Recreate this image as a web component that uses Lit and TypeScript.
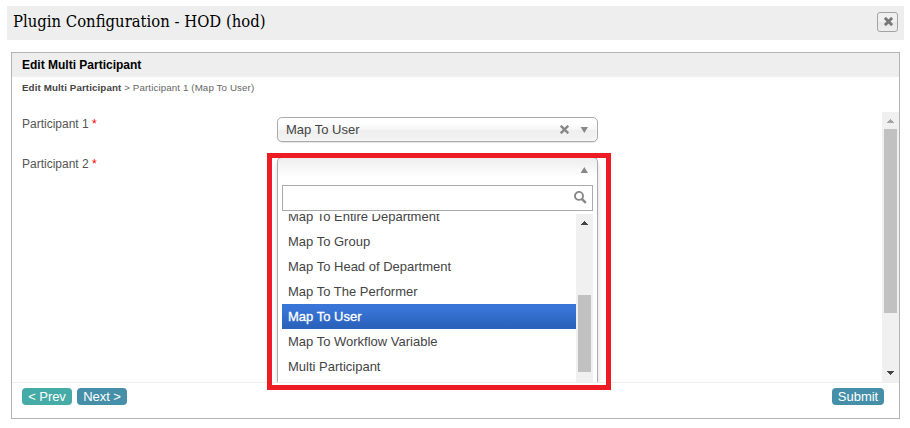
import { LitElement, html, css } from "lit";
import { customElement, property } from "lit/decorators.js";
import { classMap } from "lit/directives/class-map.js";

const OPTIONS = [
  "Map To Entire Department",
  "Map To Group",
  "Map To Head of Department",
  "Map To The Performer",
  "Map To User",
  "Map To Workflow Variable",
  "Multi Participant",
];

@customElement("scroll-track")
class ScrollTrack extends LitElement {
  @property({ type: Number }) before = 0;
  @property({ type: Number }) size = 0;
  @property({ type: Boolean }) atTop = false;
  @property({ type: Boolean }) noDown = false;

  static styles = css`
    :host { display: flex; flex-direction: column; width: 17px; flex: none; background: #f0f0f0; overflow: hidden; }
    svg { display: block; width: 17px; height: 17px; flex: none; fill: #444; }
    .dim { fill: #a3a3a3; }
    .gap { flex: none; }
    .thumb { background: #c1c1c1; margin: 0 2px; flex: none; }
    .rest { flex: 1; }
  `;

  render() {
    return html`
      <svg class=${classMap({ dim: this.atTop })} viewBox="0 0 17 17" shape-rendering="crispEdges"><path d="M8 7h1v1h1v1h1v1h1v1H5v-1h1V9h1V8h1z"/></svg>
      <div class="gap" style="height:${this.before}px"></div>
      <div class="thumb" style="height:${this.size}px"></div>
      <div class="rest"></div>
      ${this.noDown ? "" : html`<svg viewBox="0 0 17 17" shape-rendering="crispEdges"><path d="M5 6h7v1h-1v1h-1v1H9v1H8V9H7V8H6V7H5z"/></svg>`}
    `;
  }
}

@customElement("app-root")
class AppRoot extends LitElement {
  static styles = css`
    :host { display: block; height: 428px; overflow: hidden; box-sizing: border-box; padding: 6px 6px 0 7px; background: #fff; color: #444; font: 12px/16px "Liberation Sans", Arial, sans-serif; }
    * { box-sizing: border-box; }
    .title { display: flex; align-items: center; justify-content: space-between; height: 34px; padding: 0 6px; background: #eee; }
    h1 { margin: 0 0 3px; color: #000; font: 400 16.5px/24px "DejaVu Serif Condensed", "DejaVu Serif", serif; font-stretch: condensed; white-space: nowrap; }
    .close { display: flex; align-items: center; justify-content: center; width: 21px; height: 20px; margin-top: -3px; padding: 0 0 0 2px; border: 1px solid #a3a3a3; border-radius: 3px; background: linear-gradient(#f0f0f0 50%, #e7e7e7 50%, #eee); }
    .panel { display: flex; flex-direction: column; width: 889px; height: 367px; margin: 12px 0 0 4px; border: 1px solid #b3b3b3; }
    h2 { margin: 0; height: 24px; padding-left: 10px; background: #eee; color: #000; font-size: 12px; line-height: 24px; }
    .crumbs { height: 35px; padding: 3px 0 0 10px; font-size: 9.75px; letter-spacing: .11px; color: #666; }
    .crumbs b { color: #444; }
    .body { display: flex; height: 270px; flex: none; }
    .form { flex: 1; padding: 5px 0 0 10px; }
    .row { display: grid; grid-template-columns: 255px 321px; height: 40px; }
    label { line-height: 14px; color: #555; }
    label span { color: #f00; }
    .field { position: relative; height: 25px; }
    .select { display: flex; align-items: center; height: 25px; padding: 0 8px; border: 1px solid #aaa; border-radius: 5px; background: linear-gradient(#fff 20%, #f6f6f6 50%, #eee 52%, #f4f4f4); box-shadow: 0 0 3px #fff inset, 0 1px 1px rgba(0,0,0,.1); font-size: 13px; }
    .select span { flex: 1; }
    .select .x { margin-right: 11px; }
    .menu { position: absolute; left: 0; top: 0; width: 321px; height: 225px; padding: 0 4px; border: 1px solid #aaa; border-bottom: 0; border-radius: 5px 5px 0 0; background: linear-gradient(#eee, #fff 20px); box-shadow: 0 4px 5px rgba(0,0,0,.15); clip-path: inset(0 -8px 0 -8px); }
    .head { display: flex; justify-content: flex-end; height: 27px; padding: 9px 4px 0 0; }
    .search { display: flex; align-items: center; justify-content: flex-end; height: 26px; padding: 0 5px 2px 0; border: 1px solid #aaa; background: #fff; }
    .list { display: flex; height: 168px; margin-top: 3px; }
    .options { flex: 1; overflow: hidden; }
    .option { height: 25px; padding-left: 6px; font-size: 13px; line-height: 25px; }
    .option:first-child { margin-top: -10px; }
    .option.active { color: #fff; -webkit-text-stroke: .3px #fff; background: linear-gradient(#3875d7 20%, #2a62bc 90%); }
    .frame { position: absolute; left: -10px; top: -4px; width: 344px; height: 237px; border: 5px solid #ed1c24; z-index: 2; }
    .footer { display: flex; align-items: flex-start; flex: 1; gap: 5px; padding: 5px 15px 0 10px; border-top: 1px solid #eee; }
    .btn { height: 17px; padding: 0; border: 0; border-radius: 4px; background: #458fa8; color: #fff; font: 13px/17px "Liberation Sans", Arial, sans-serif; letter-spacing: -.1px; width: 50px; text-align: center; }
    .btn.prev { background: #45aba6; }
    .btn.submit { width: 52px; margin-left: auto; letter-spacing: 0; }
    svg { flex: none; }
  `;

  render() {
    return html`
      <div class="title">
        <h1>Plugin Configuration - HOD (hod)</h1>
        <button class="close" aria-label="Close">
          <svg width="9" height="9" viewBox="0 0 10 10" stroke="#777" stroke-width="3.2"><path d="M1 1l8 8M9 1L1 9"/></svg>
        </button>
      </div>
      <div class="panel">
        <h2>Edit Multi Participant</h2>
        <div class="crumbs"><b>Edit Multi Participant</b> &gt; Participant 1 (Map To User)</div>
        <div class="body">
          <div class="form">
            <div class="row">
              <label>Participant 1 <span>*</span></label>
              <div class="field">
                <div class="select">
                  <span>Map To User</span>
                  <svg class="x" width="9" height="9" viewBox="0 0 9 9" stroke="#888" stroke-width="2.4"><path d="M.7.7l7.6 7.6M8.3.7L.7 8.3"/></svg>
                  <svg width="9" height="6" viewBox="0 0 9 6" fill="#888"><path d="M.6 0h7.4L4.3 6z"/></svg>
                </div>
              </div>
            </div>
            <div class="row">
              <label>Participant 2 <span>*</span></label>
              <div class="field">
                <div class="menu">
                  <div class="head"><svg width="9" height="6" viewBox="0 0 9 6" fill="#888"><path d="M.6 6h7.4L4.3 0z"/></svg></div>
                  <div class="search">
                    <svg width="13" height="13" viewBox="0 0 13 13" fill="none" stroke="#888"><circle cx="5" cy="4.9" r="4" stroke-width="1.9"/><path d="M7.8 7.8l4 4" stroke-width="2.5"/></svg>
                  </div>
                  <div class="list">
                    <div class="options">
                      ${OPTIONS.map((o) => html`<div class=${classMap({ option: true, active: o === "Map To User" })}>${o}</div>`)}
                    </div>
                    <scroll-track .before=${64} .size=${77} .noDown=${true}></scroll-track>
                  </div>
                </div>
                <div class="frame"></div>
              </div>
            </div>
          </div>
          <scroll-track .before=${0} .size=${184} .atTop=${true}></scroll-track>
        </div>
        <div class="footer">
          <button class="btn prev">&lt; Prev</button>
          <button class="btn">Next &gt;</button>
          <button class="btn submit">Submit</button>
        </div>
      </div>
    `;
  }
}
